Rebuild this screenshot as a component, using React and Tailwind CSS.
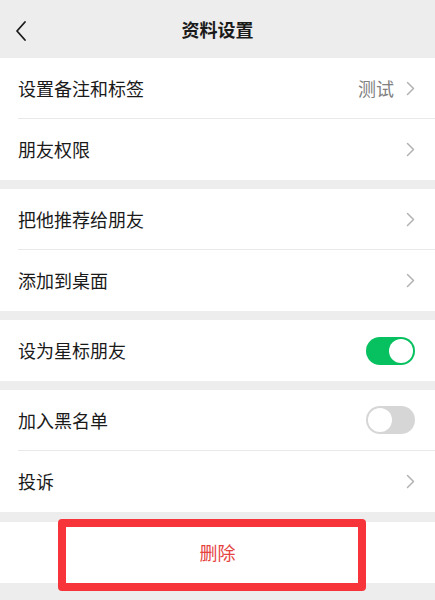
import React from 'react';

const Chevron = () => (
  <svg width="9" height="15" viewBox="0 0 9 15" fill="none" className="ml-3">
    <path d="M1.5 1.5 L7.5 7.5 L1.5 13.5" stroke="#b2b2b2" strokeWidth="1.5" strokeLinecap="round" strokeLinejoin="round" />
  </svg>
);

const Toggle = ({ on }) => (
  <div
    className={`w-[49px] h-[28px] rounded-full p-[2px] flex items-center ${
      on ? 'bg-[#07c160] justify-end' : 'bg-[#d6d6d6] justify-start'
    }`}
  >
    <div className="w-[24px] h-[24px] rounded-full bg-white" />
  </div>
);

const Row = ({ label, value, toggle, divider }) => (
  <div className="h-[61px] flex items-center pl-[18px] bg-white">
    <div className={`h-full flex-1 flex items-center pr-[20px] ${divider ? 'border-b border-[#e9e9e9]' : ''}`}>
      <span className="flex-1 text-[18px] text-[#1a1a1a]">{label}</span>
      {value && <span className="text-[18px] text-[#808080]">{value}</span>}
      {toggle !== undefined ? <Toggle on={toggle} /> : <Chevron />}
    </div>
  </div>
);

export default function App() {
  return (
    <div
      className="w-[435px] h-[600px] bg-[#ededed] overflow-hidden relative"
      style={{ fontFamily: '"Noto Sans CJK SC", "Noto Sans", sans-serif' }}
    >
      {/* Header */}
      <div className="h-[58px] flex items-center relative">
        <svg width="14" height="22" viewBox="0 0 14 22" fill="none" className="absolute left-[14px] top-[20px]">
          <path d="M11 2 L3 11 L11 20" stroke="#1a1a1a" strokeWidth="1.8" strokeLinecap="round" strokeLinejoin="round" />
        </svg>
        <div className="flex-1 text-center text-[18px] font-bold text-[#1a1a1a]">资料设置</div>
      </div>

      <div className="flex flex-col">
        <Row label="设置备注和标签" value="测试" divider />
        <Row label="朋友权限" />
        <div className="h-[9px]" />
        <Row label="把他推荐给朋友" divider />
        <Row label="添加到桌面" />
        <div className="h-[9px]" />
        <Row label="设为星标朋友" toggle={true} />
        <div className="h-[9px]" />
        <Row label="加入黑名单" toggle={false} divider />
        <Row label="投诉" />
        <div className="h-[10px]" />
        <div className="h-[61px] bg-white flex items-center justify-center text-[18px] text-[#e64340]">删除</div>
      </div>

      {/* annotation box */}
      <div className="absolute left-[58px] top-[519px] w-[308px] h-[72px] border-[8px] border-[#f6343a] rounded-[4px]" />
    </div>
  );
}
